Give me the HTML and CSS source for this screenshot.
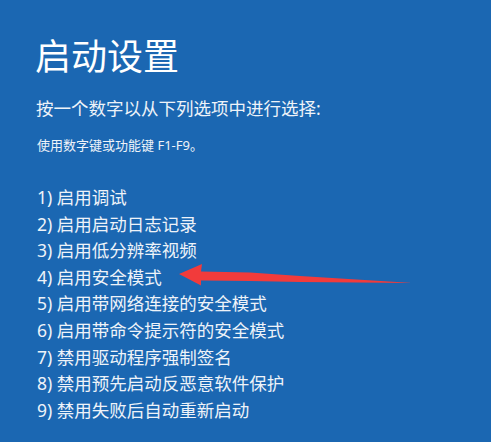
FILE: index.html
```html
<!DOCTYPE html>
<html lang="zh-CN">
<head>
<meta charset="utf-8">
<title>启动设置</title>
<link rel="stylesheet" href="styles.css">
</head>
<body>
<main class="screen">
  <h1 class="title">启动设置</h1>
  <p class="subtitle">按一个数字以从下列选项中进行选择:</p>
  <p class="hint">使用数字键或功能键 F1-F9。</p>
  <ol class="options">
    <li>1) 启用调试</li>
    <li>2) 启用启动日志记录</li>
    <li>3) 启用低分辨率视频</li>
    <li>4) 启用安全模式</li>
    <li>5) 启用带网络连接的安全模式</li>
    <li>6) 启用带命令提示符的安全模式</li>
    <li>7) 禁用驱动程序强制签名</li>
    <li>8) 禁用预先启动反恶意软件保护</li>
    <li>9) 禁用失败后自动重新启动</li>
  </ol>
  <svg class="arrow" width="491" height="442" viewBox="0 0 491 442" aria-hidden="true">
    <polygon fill="#f23b3b" points="179,274 202,264 201,271.5 250,272.5 300,276 413,283 300,282 250,281 201,280.5 201,285.5"/>
  </svg>
</main>
</body>
</html>
```

FILE: styles.css
```css
html, body {
  margin: 0;
  padding: 0;
}
body {
  background: #1b67b2;
  width: 491px;
  height: 442px;
  overflow: hidden;
  font-family: "Noto Sans", "Noto Sans CJK SC", sans-serif;
  color: #eef3f9;
}
.screen {
  position: relative;
  width: 491px;
  height: 442px;
  box-sizing: border-box;
  padding: 37px 0 0 35px;
}
.title {
  margin: 0;
  font-size: 36px;
  line-height: 40px;
  font-weight: 400;
  color: #ffffff;
}
.subtitle {
  margin: 19px 0 0 1px;
  font-size: 17.5px;
  line-height: 24px;
}
.hint {
  margin: 15px 0 0 2px;
  font-size: 13px;
  line-height: 20px;
}
.options {
  list-style: none;
  margin: 29px 0 0 2px;
  padding: 0;
  font-size: 17.5px;
  line-height: 26.6px;
}
.arrow {
  position: absolute;
  left: 0;
  top: 0;
}
```
